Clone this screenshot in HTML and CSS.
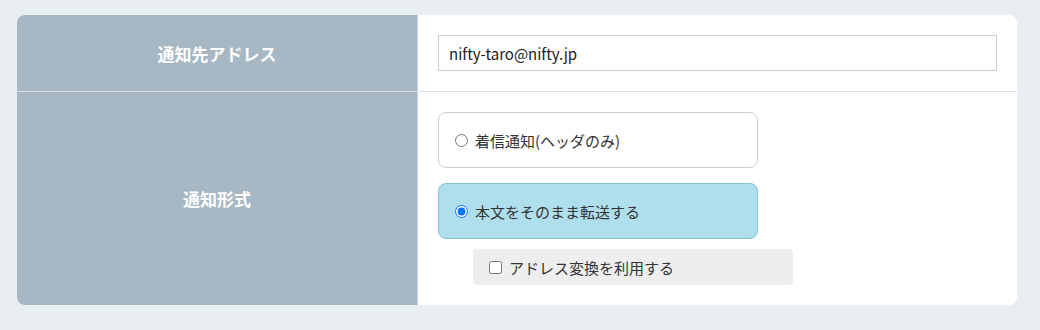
FILE: index.html
```html
<!DOCTYPE html>
<html lang="ja">

<head>
    <meta charset="UTF-8" name="viewport" content="width=device-width, initial-scale=1.0">
    <title>転送設定</title>
    <link rel="stylesheet" href="styles.css">
</head>

<body>
    <div class="settingTable">
        <div class="row">
            <div class="label">通知先アドレス</div>
            <div class="field">
                <input type="text" class="textInput" value="nifty-taro@nifty.jp">
            </div>
        </div>
        <div class="row lastRow">
            <div class="label">通知形式</div>
            <div class="field options">
                <label class="option">
                    <input type="radio" name="notifyType">
                    <span>着信通知(ヘッダのみ)</span>
                </label>
                <label class="option selected">
                    <input type="radio" name="notifyType" checked>
                    <span>本文をそのまま転送する</span>
                </label>
                <label class="subOption">
                    <input type="checkbox">
                    <span>アドレス変換を利用する</span>
                </label>
            </div>
        </div>
    </div>
</body>

</html>
```

FILE: styles.css
```css
body {
    margin: 0;
    padding: 15px 17px;
    background-color: #e9eef1;
    font-family: "Noto Sans CJK JP", "Noto Sans", sans-serif;
    font-size: 15px;
    color: #333;
}

.settingTable {
    width: 1000px;
    background-color: white;
    border-radius: 8px;
    overflow: hidden;
}

.row {
    display: grid;
    grid-template-columns: 401px 1fr;
    border-bottom: 1px solid #dae1e5;
}

.lastRow {
    border-bottom: none;
}

.label {
    display: flex;
    align-items: center;
    justify-content: center;
    background-color: #a7b8c4;
    border-right: 1px solid #c9d4db;
    color: white;
    font-weight: bold;
    font-size: 17px;
}

.field {
    padding: 20px 20px;
}

.textInput {
    display: block;
    box-sizing: border-box;
    width: 559px;
    height: 36px;
    margin: 0;
    padding: 0 10px;
    border: 1px solid #cccccc;
    font-family: "Noto Sans CJK JP", "Noto Sans", sans-serif;
    font-size: 15px;
    color: #222;
    outline: none;
}

.options {
    display: flex;
    flex-direction: column;
    align-items: flex-start;
}

.option {
    display: flex;
    align-items: center;
    box-sizing: border-box;
    width: 320px;
    height: 56px;
    padding: 0 16px;
    gap: 7px;
    border: 1px solid #cccccc;
    border-radius: 8px;
    background-color: white;
    cursor: pointer;
}

.option + .option {
    margin-top: 15px;
}

.option.selected {
    background-color: #afdfec;
    border-color: #86c3d3;
}

.option input,
.subOption input {
    margin: 0;
    width: 13px;
    height: 13px;
}

.subOption {
    display: flex;
    align-items: center;
    box-sizing: border-box;
    width: 320px;
    height: 36px;
    margin: 10px 0 0 35px;
    padding: 0 16px;
    gap: 7px;
    background-color: #eeeeee;
    border-radius: 4px;
    cursor: pointer;
}
```
